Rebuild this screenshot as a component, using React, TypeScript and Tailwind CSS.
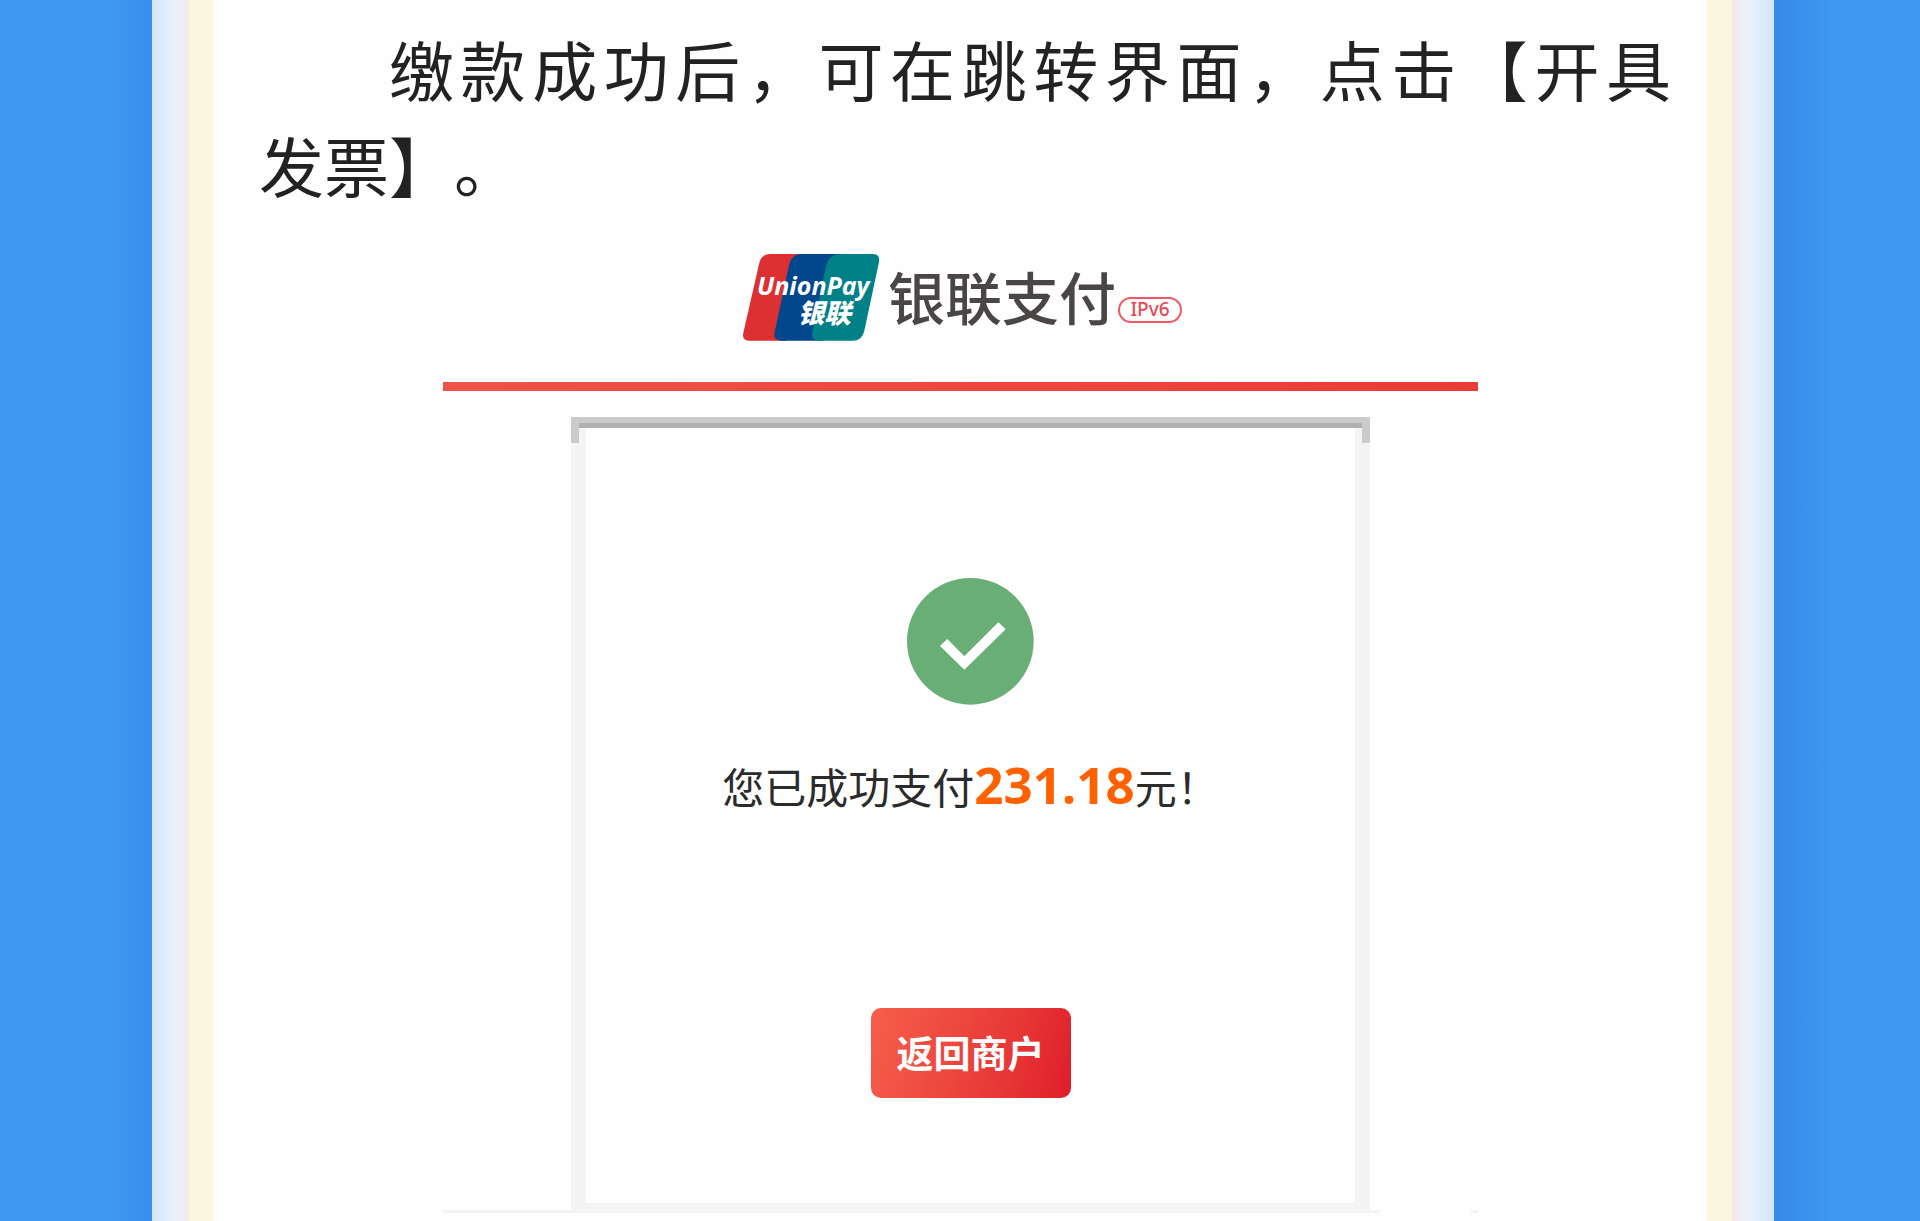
import React from "react";

interface ShadeProps {
  className: string;
}

function Shade({ className }: ShadeProps) {
  return <div aria-hidden="true" className={`shrink-0 ${className}`} />;
}

function UnionPayLogo() {
  return (
    <svg className="h-[87px] w-[137px]" viewBox="0 0 411 261" role="img" aria-label="UnionPay 银联">
      <path d="M82 0H180L130 260H20Q-4 260 1 236L49 26Q56 0 82 0Z" fill="#dd3033" />
      <path d="M172 0H290L240 260H112Q90 258 95 234L138 32Q144 4 172 0Z" fill="#00488b" />
      <path d="M288 0H390Q412 0 408 24L364 230Q357 260 330 260H226Q203 258 208 234L250 32Q257 4 288 0Z" fill="#008187" />
      <g fill="#fff" fontStyle="italic" fontWeight="700">
        <text x="42" y="124" fontFamily="'Open Sans', sans-serif" fontSize="75">
          UnionPay
        </text>
        <text x="164" y="206" fontFamily="'Noto Sans CJK SC', sans-serif" fontSize="80" fontWeight="900">
          银联
        </text>
      </g>
    </svg>
  );
}

function SuccessIcon() {
  return (
    <svg className="h-[127px] w-[127px]" viewBox="0 0 381 381" aria-hidden="true">
      <circle cx="190" cy="190" r="190" fill="#6aae77" />
      <path d="M99 204L121 183L172 235L274 133L296 154L172 275Z" fill="#fff" />
    </svg>
  );
}

function PaymentHeader() {
  return (
    <header className="flex h-[95px] items-center justify-center pl-1">
      <UnionPayLogo />
      <span className="ml-2 pb-1 text-[57px] leading-none font-medium text-[#4a4645]">银联支付</span>
      <span className="mt-6 ml-0.5 flex h-[26px] w-16 items-center justify-center rounded-full border-2 border-[#ee5a64] font-['Noto_Sans',sans-serif] text-[19px] font-medium text-[#e64a55]">
        IPv6
      </span>
    </header>
  );
}

function ResultCard() {
  return (
    <section className="relative mr-[108px] ml-[128px] flex flex-col items-center border-x-[15px] border-b-[10px] border-[#f4f4f4] pt-[161px] pb-[105px]">
      <div
        aria-hidden="true"
        className="absolute -inset-x-[15px] top-0 h-[26px] border-x-8 border-t-[6px] border-[#cbcbcb]"
      >
        <div className="h-[5px] bg-[#b0b0b0]" />
      </div>
      <SuccessIcon />
      <p className="mt-[43px] text-[42px] leading-[72px] whitespace-nowrap text-[#2b2b2b]">
        您已成功支付
        <strong className="font-['Open_Sans',sans-serif] text-[51px] font-bold text-[#ff6000]">231.18</strong>
        元！
      </p>
      <button
        type="button"
        className="mt-[186px] h-[90px] w-[200px] rounded-[10px] bg-linear-105 from-[#f65e4b] to-[#df1b2b] text-[37px] font-bold text-white"
      >
        返回商户
      </button>
    </section>
  );
}

export default function App() {
  return (
    <div className="flex min-h-screen bg-[#3f98f2] font-['Noto_Sans_CJK_SC',sans-serif]">
      <Shade className="w-[152px] bg-linear-to-r from-[#3f98f2] from-70% to-[#3b8eec]" />
      <Shade className="w-[37px] bg-linear-to-r from-[#d3e4fa] via-[#e8f1fd] via-60% to-[#f5e8ed]" />
      <Shade className="w-6 bg-linear-to-r from-[#f7f6e0] to-[#fdf7df]" />
      <main className="min-w-0 flex-1 bg-[#fefefe] pt-5">
        <div className="pr-9 pl-[46px] text-[65px] leading-[96px] text-[#222] [text-spacing-trim:space-all]">
          <p className="pl-[2em] [text-align-last:justify]">缴款成功后，可在跳转界面，点击【开具</p>
          <p>发票】。</p>
        </div>
        <div className="mr-[229px] ml-[230px] pt-[38px]">
          <PaymentHeader />
          <div className="mt-[37px] h-[9px] bg-linear-to-r from-[#ef5348] to-[#e93c37]" />
          <div className="mt-[26px]">
            <ResultCard />
          </div>
          <div className="-mt-[3px] flex h-[3px] justify-between">
            <div className="w-[937px] bg-[#f4f4f4]" />
            <div className="w-[7px] bg-[#f4f4f4]" />
          </div>
        </div>
      </main>
      <Shade className="w-[25px] bg-linear-to-r from-[#fdf7df] to-[#f7f6e0]" />
      <Shade className="w-[42px] bg-linear-to-r from-[#f6e8ed] via-[#ebf2fc] via-40% to-[#d3e4fa]" />
      <Shade className="w-[146px] bg-linear-to-r from-[#3789e7] to-[#3f98f2] to-40%" />
    </div>
  );
}
